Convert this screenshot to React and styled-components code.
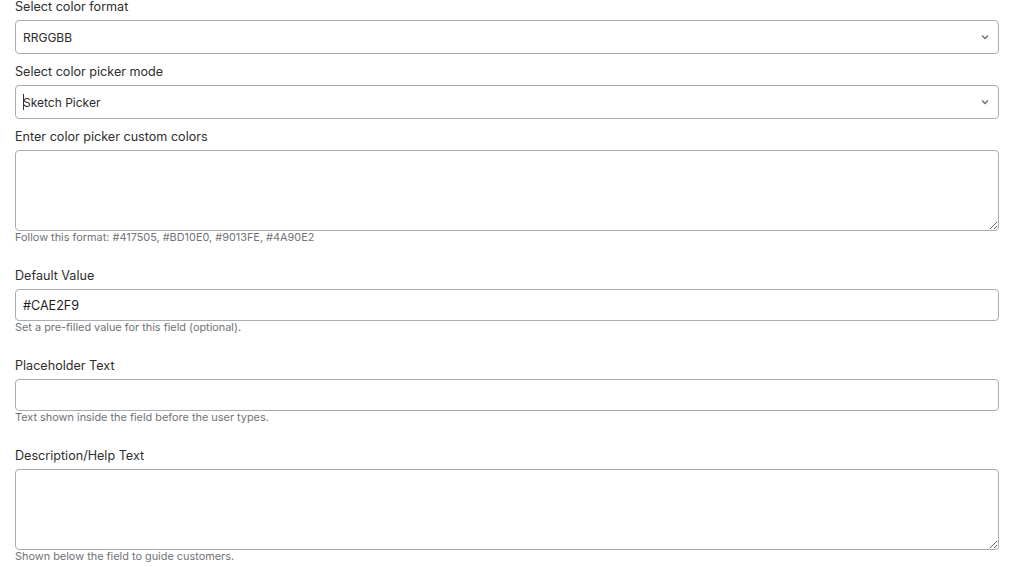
import React from "react";
import styled, { createGlobalStyle } from "styled-components";

const GlobalStyle = createGlobalStyle`
  html, body {
    margin: 0;
    padding: 0;
    background: #ffffff;
  }
  body {
    font-family: Inter, "Noto Sans", "Liberation Sans", sans-serif;
    color: #2c2c2c;
    overflow: hidden;
  }
`;

const Page = styled.div`
  width: 984px;
  margin: -3px 0 0 15px;
  display: flex;
  flex-direction: column;
`;

const Field = styled.div`
  display: flex;
  flex-direction: column;
  margin-bottom: 8px;
`;

const Label = styled.label`
  font-size: 12.6px;
  line-height: 18px;
  padding-top: 1px;
  color: #2e2e2e;
  margin-bottom: 4px;
`;

const SelectWrap = styled.div`
  position: relative;
`;

const Select = styled.select`
  appearance: none;
  width: 100%;
  height: 34px;
  box-sizing: border-box;
  border: 1px solid #a9adb2;
  border-radius: 4px;
  background: #ffffff;
  padding: 0 30px 0 7px;
  font-family: inherit;
  font-size: 12px;
  color: #2c2c2c;
  outline: none;
`;

const Chevron = styled.svg`
  position: absolute;
  right: 10px;
  top: 50%;
  margin-top: -3px;
  width: 8px;
  height: 6px;
  pointer-events: none;
`;

const Input = styled.input`
  width: 100%;
  height: 32px;
  box-sizing: border-box;
  border: 1px solid #a9adb2;
  border-radius: 4px;
  padding: 0 7px;
  font-family: inherit;
  font-size: 12.6px;
  color: #1e1e1e;
  outline: none;
`;

const TextArea = styled.textarea`
  width: 100%;
  height: 81px;
  box-sizing: border-box;
  border: 1px solid #a9adb2;
  border-radius: 4px;
  padding: 6px 7px;
  font-family: inherit;
  font-size: 13px;
  display: block;
  outline: none;
`;

const Help = styled.span`
  font-size: 10.9px;
  line-height: 13px;
  color: #707377;
  margin-bottom: 14px;
`;

const Cursor = styled.span`
  position: absolute;
  left: 8px;
  top: 9px;
  width: 1px;
  height: 16px;
  background: #333;
  pointer-events: none;
`;

const SelectField = ({ label, value, options, cursor }) => (
  <Field>
    <Label>{label}</Label>
    <SelectWrap>
      <Select defaultValue={value}>
        {options.map((o) => (
          <option key={o}>{o}</option>
        ))}
      </Select>
      {cursor && <Cursor />}
      <Chevron viewBox="0 0 8 6">
        <path d="M1 1.5 L4 4.5 L7 1.5" fill="none" stroke="#6c6f74" strokeWidth="1.4" />
      </Chevron>
    </SelectWrap>
  </Field>
);

export default function App() {
  return (
    <>
      <GlobalStyle />
      <Page>
        <SelectField
          label="Select color format"
          value="RRGGBB"
          options={["RRGGBB", "RGB", "HSL"]}
        />
        <SelectField
          label="Select color picker mode"
          value="Sketch Picker"
          options={["Sketch Picker", "Chrome Picker", "Block Picker"]}
          cursor
        />
        <Field>
          <Label>Enter color picker custom colors</Label>
          <TextArea />
          <Help>Follow this format: #417505, #BD10E0, #9013FE, #4A90E2</Help>
        </Field>
        <Field>
          <Label>Default Value</Label>
          <Input defaultValue="#CAE2F9" />
          <Help>Set a pre-filled value for this field (optional).</Help>
        </Field>
        <Field>
          <Label>Placeholder Text</Label>
          <Input />
          <Help>Text shown inside the field before the user types.</Help>
        </Field>
        <Field>
          <Label>Description/Help Text</Label>
          <TextArea />
          <Help>Shown below the field to guide customers.</Help>
        </Field>
      </Page>
    </>
  );
}
